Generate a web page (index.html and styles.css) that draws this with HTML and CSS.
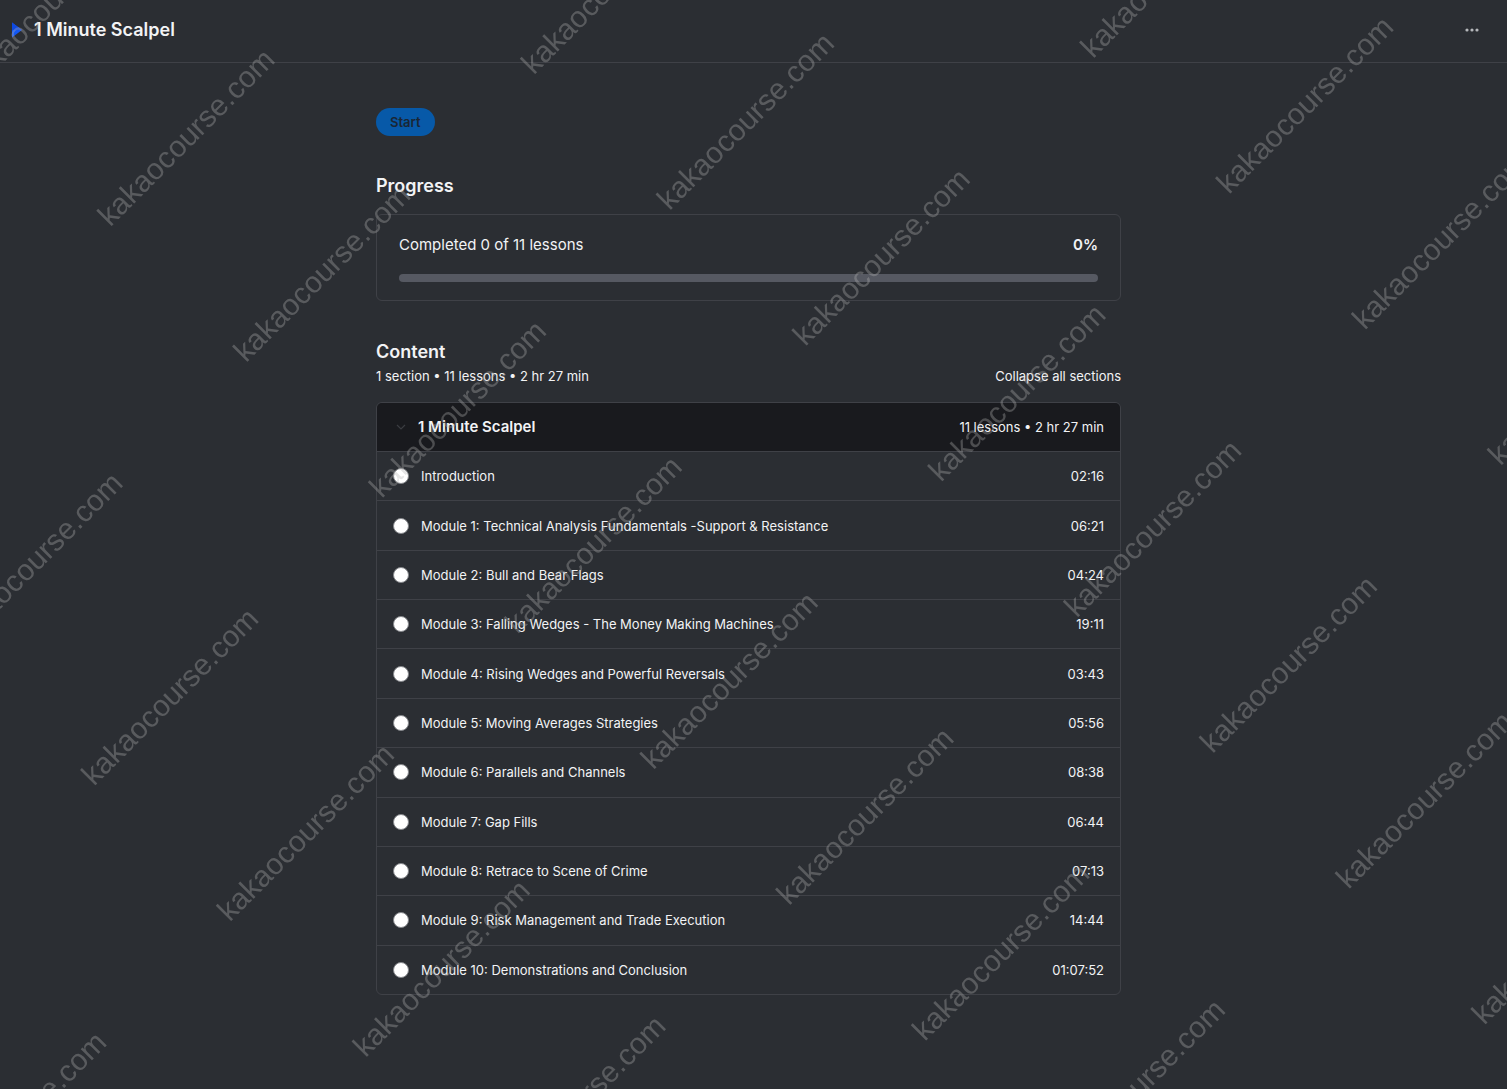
FILE: index.html
```html
<!DOCTYPE html>
<html lang="en">
<head>
    <meta charset="UTF-8">
    <meta name="viewport" content="width=device-width, initial-scale=1.0">
    <title>1 Minute Scalpel</title>
    <link rel="stylesheet" href="styles.css">
</head>
<body>
    <header class="topbar">
        <div class="brand">
            <svg class="brand-icon" width="10" height="16" viewBox="0 0 10 16" aria-hidden="true">
                <path d="M0 0.5 L10 8 L0 15.5 Z" fill="#1257f5"/>
                <path d="M0 0.5 L10 8 L0 8 Z" fill="#0f49e0"/>
            </svg>
            <h1>1 Minute Scalpel</h1>
        </div>
        <button class="more" aria-label="More options">
            <svg width="14" height="4" viewBox="0 0 14 4" aria-hidden="true">
                <circle cx="2" cy="2" r="1.6"/>
                <circle cx="7" cy="2" r="1.6"/>
                <circle cx="12" cy="2" r="1.6"/>
            </svg>
        </button>
    </header>

    <main class="container">
        <button class="start">Start</button>

        <h2>Progress</h2>
        <div class="progress-card">
            <div class="progress-text">
                <label for="course-progress">Completed 0 of 11 lessons</label>
                <strong>0%</strong>
            </div>
            <progress id="course-progress" value="0" max="11"></progress>
        </div>

        <h2>Content</h2>
        <div class="content-info">
            <span>1 section • 11 lessons • 2 hr 27 min</span>
            <button class="collapse-all">Collapse all sections</button>
        </div>

        <section class="course-section">
            <button class="section-header" aria-expanded="true">
                <svg class="chevron" width="10" height="6" viewBox="0 0 10 6" aria-hidden="true">
                    <path d="M1 1 L5 5 L9 1" fill="none" stroke="#3a3c41" stroke-width="1.2"/>
                </svg>
                <span class="section-title">1 Minute Scalpel</span>
                <span>11 lessons • 2 hr 27 min</span>
            </button>
            <ul class="lessons">
                <li><a href="#"><span class="dot"></span><span class="name">Introduction</span><span>02:16</span></a></li>
                <li><a href="#"><span class="dot"></span><span class="name">Module 1: Technical Analysis Fundamentals -Support &amp; Resistance</span><span>06:21</span></a></li>
                <li><a href="#"><span class="dot"></span><span class="name">Module 2: Bull and Bear Flags</span><span>04:24</span></a></li>
                <li><a href="#"><span class="dot"></span><span class="name">Module 3: Falling Wedges - The Money Making Machines</span><span>19:11</span></a></li>
                <li><a href="#"><span class="dot"></span><span class="name">Module 4: Rising Wedges and Powerful Reversals</span><span>03:43</span></a></li>
                <li><a href="#"><span class="dot"></span><span class="name">Module 5: Moving Averages Strategies</span><span>05:56</span></a></li>
                <li><a href="#"><span class="dot"></span><span class="name">Module 6: Parallels and Channels</span><span>08:38</span></a></li>
                <li><a href="#"><span class="dot"></span><span class="name">Module 7: Gap Fills</span><span>06:44</span></a></li>
                <li><a href="#"><span class="dot"></span><span class="name">Module 8: Retrace to Scene of Crime</span><span>07:13</span></a></li>
                <li><a href="#"><span class="dot"></span><span class="name">Module 9: Risk Management and Trade Execution</span><span>14:44</span></a></li>
                <li><a href="#"><span class="dot"></span><span class="name">Module 10: Demonstrations and Conclusion</span><span>01:07:52</span></a></li>
            </ul>
        </section>
    </main>

    <svg class="watermark" aria-hidden="true">
        <g id="marks" transform="translate(187 138) rotate(-45)"></g>
    </svg>

    <script>
        // repeat the site name diagonally over the whole window
        const marks = document.getElementById('marks');

        function drawMarks() {
            marks.innerHTML = '';
            for (let col = -8; col <= 8; col++) {
                for (let row = -8; row <= 16; row++) {
                    const x = col * 407;
                    const y = row * 192;
                    const px = 187 + (x + y) * Math.SQRT1_2;
                    const py = 138 + (y - x) * Math.SQRT1_2;
                    if (px < -90 || px > window.innerWidth + 90) continue;
                    if (py < -90 || py > window.innerHeight + 90) continue;
                    const text = document.createElementNS('http://www.w3.org/2000/svg', 'text');
                    text.setAttribute('x', x);
                    text.setAttribute('y', y + 9);
                    text.textContent = 'kakaocourse.com';
                    marks.appendChild(text);
                }
            }
        }

        window.onresize = drawMarks;
        drawMarks();
    </script>
</body>
</html>
```
FILE: styles.css
```css
:root {
    --base: #2b2e33;
    --dark: #191a1e;
    --line: #3f4147;
    --track: #565962;
    --text: #f2f3f5;
    --blue: #0759a8;
}

* {
    box-sizing: border-box;
}

body {
    margin: 0;
    min-height: 100vh;
    font-family: Inter, sans-serif;
    font-size: 13px;
    line-height: 20px;
    color: var(--text);
    background-color: var(--base);
}

button {
    padding: 0;
    border: none;
    background: none;
    color: inherit;
    font: inherit;
    cursor: pointer;
}

h1, h2 {
    margin: 0;
    font-size: 18px;
    font-weight: 600;
    line-height: 24px;
}

.topbar {
    display: flex;
    align-items: center;
    justify-content: space-between;
    height: 63px;
    padding: 0 28px 2px 12px;
    border-bottom: 1px solid var(--line);
}

.brand {
    display: flex;
    align-items: center;
    gap: 12px;
}

.brand-icon, .more svg {
    display: block;
}

.more {
    fill: #b5b7bb;
}

.container {
    width: calc(100% - 42px);
    max-width: 745px;
    margin: 0 auto;
    padding: 45px 0;
    position: relative;
    right: 5px;
}

.start {
    display: block;
    height: 28px;
    padding: 0 14px;
    margin-bottom: 38px;
    border-radius: 14px;
    background-color: var(--blue);
    color: #1a2634;
    font-weight: 600;
}

.progress-card {
    margin: 16px 0 39px;
    padding: 20px 22px 18px;
    border: 1px solid var(--line);
    border-radius: 6px;
}

.progress-text {
    display: flex;
    justify-content: space-between;
    margin-bottom: 19px;
    font-size: 15px;
}

.progress-text strong {
    font-weight: 600;
}

progress {
    display: block;
    width: 100%;
    height: 8px;
    appearance: none;
    border: none;
    border-radius: 4px;
    overflow: hidden;
    background-color: var(--track);
}

progress::-webkit-progress-bar {
    background-color: var(--track);
}

progress::-webkit-progress-value {
    background-color: var(--blue);
}

.content-info {
    display: flex;
    justify-content: space-between;
    margin: 2px 0 16px;
}

.course-section {
    border: 1px solid var(--line);
    border-radius: 6px;
    overflow: hidden;
}

.section-header, .lessons a {
    display: flex;
    align-items: center;
    width: 100%;
    padding: 0 16px;
}

.section-header {
    height: 48px;
    background-color: var(--dark);
}

.chevron {
    margin: 0 12px 0 3px;
}

.section-title {
    flex: 1;
    text-align: left;
    font-size: 15px;
    font-weight: 600;
}

.lessons {
    display: grid;
    grid-auto-rows: 1fr;
    min-height: 543px;
    margin: 0;
    padding: 0;
    list-style: none;
}

.lessons li {
    display: flex;
    border-top: 1px solid var(--line);
}

.lessons a {
    color: inherit;
    text-decoration: none;
}

.dot {
    width: 16px;
    height: 16px;
    margin-right: 12px;
    border: 1px solid #85878b;
    border-radius: 50%;
    background-color: #fff;
}

.name {
    flex: 1;
}

.watermark {
    position: fixed;
    inset: 0;
    width: 100%;
    height: 100%;
    pointer-events: none;
    fill: rgba(180, 180, 180, 0.34);
    font-family: "Liberation Sans", Arial, sans-serif;
    font-size: 30px;
    text-anchor: middle;
}
```
